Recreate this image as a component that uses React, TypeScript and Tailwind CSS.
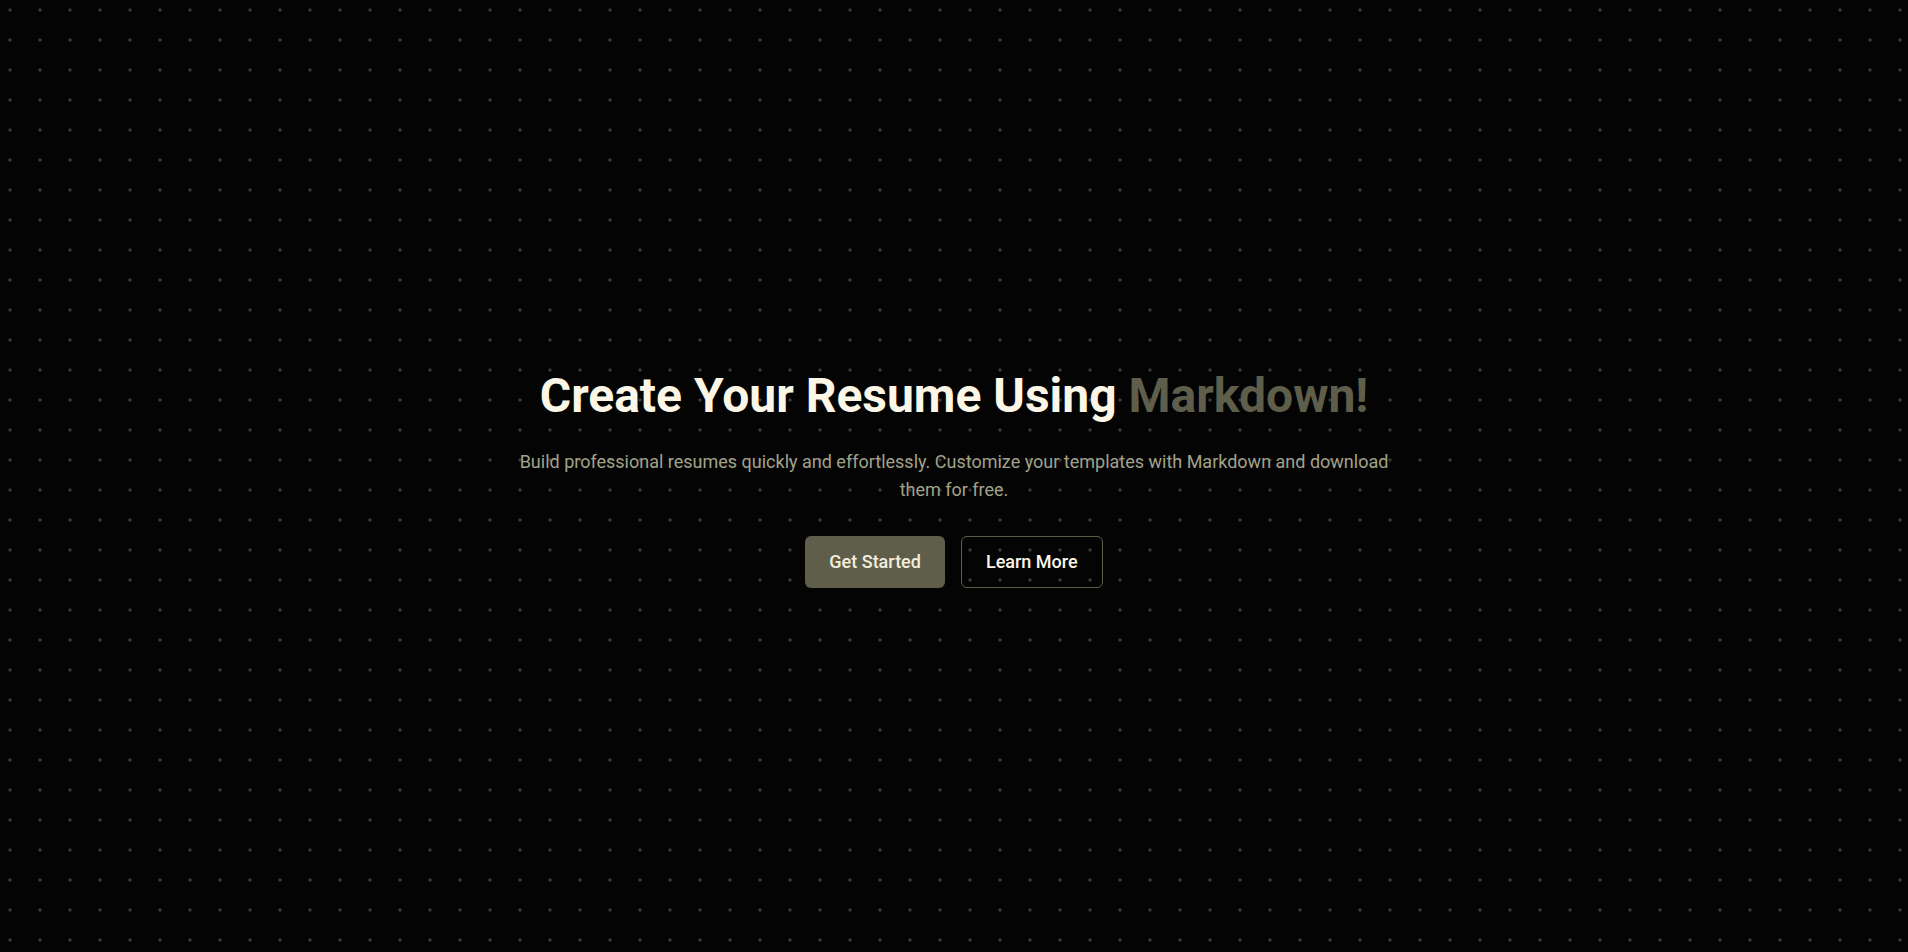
import React from "react";

export default function App() {
  return (
    <div
      className="min-h-screen w-full bg-[#040404] bg-[radial-gradient(circle,#3c3c3c_1.2px,transparent_2px)] bg-[length:30px_30px] bg-[position:-5px_-5px] flex items-center justify-center"
      style={{ fontFamily: "Roboto, 'Noto Sans', sans-serif" }}
    >
      <div className="flex flex-col items-center text-center pt-[8px]">
        <h1 className="text-5xl font-bold leading-none text-[#fcf6e6]">
          Create Your Resume Using <span className="text-[#5f5e4b]">Markdown!</span>
        </h1>
        <p className="mt-7 max-w-[900px] text-lg leading-7 text-[#a2a28a]">
          Build professional resumes quickly and effortlessly. Customize your templates with Markdown and download them for free.
        </p>
        <div className="mt-8 flex gap-4">
          <button className="px-6 py-[11px] rounded-md bg-[#5f5e4b] text-[#f3eedc] text-lg font-medium leading-7">
            Get Started
          </button>
          <button className="px-6 py-[11px] rounded-md border border-[#5f5e4b] text-[#fcf6e6] text-lg font-medium leading-7">
            Learn More
          </button>
        </div>
      </div>
    </div>
  );
}
